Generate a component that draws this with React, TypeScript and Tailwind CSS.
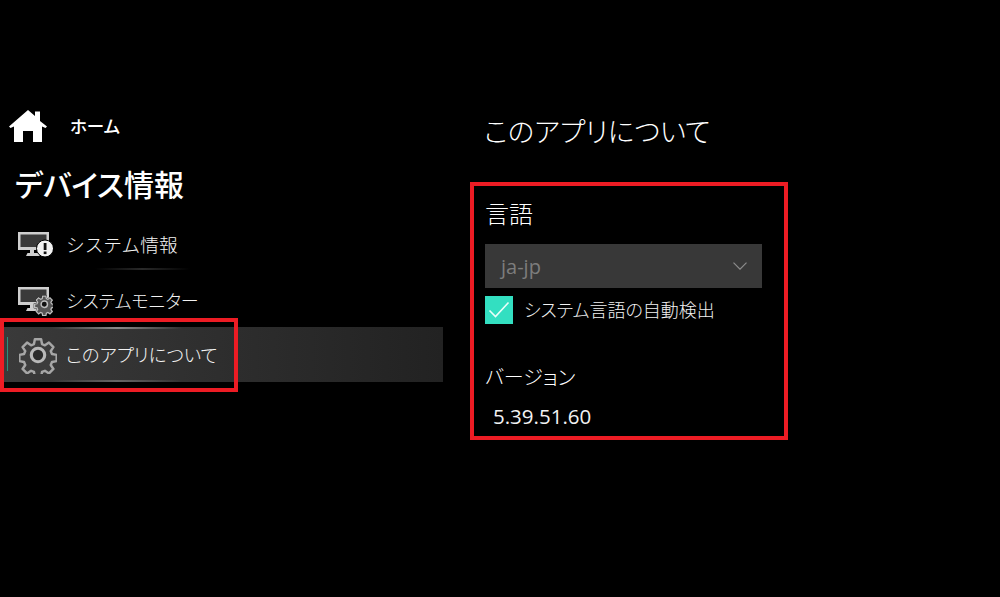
import React from 'react';

const jp = "font-['Noto_Sans_CJK_JP','Noto_Sans',sans-serif] [font-feature-settings:'palt']";

const gearPath =
  'M13.2 2h5.6l.8 4.2 2.6 1.1 3.6-2.4 4 4-2.4 3.6 1.1 2.6 4.2.8v5.6l-4.2.8-1.1 2.6 2.4 3.6-4 4-3.6-2.4-2.6 1.1-.8 4.2h-5.6l-.8-4.2-2.6-1.1-3.6 2.4-4-4 2.4-3.6-1.1-2.6-4.2-.8v-5.6l4.2-.8 1.1-2.6-2.4-3.6 4-4 3.6 2.4 2.6-1.1z';

function HomeIcon() {
  return (
    <svg width="40" height="34" viewBox="0 0 40 34" className="shrink-0">
      <path fill="#fff" d="M1 17.5 20 1l7 6V2.500h5v9.500l7 5.500-1.500 1.500-3.500-1.500V33h-9V22h-10v11H6V17.500L2.500 19z" />
    </svg>
  );
}

function MonitorIcon({ badge }: { badge: 'alert' | 'gear' }) {
  return (
    <svg width="36" height="32" viewBox="0 0 36 32" className="shrink-0">
      <path fill="#cfcfcf" d="M1 3h31v14h-6v4H1z" />
      <path fill="#3a3a3a" d="M3.500 5.500h26v9h-6v4h-20z" />
      <path fill="#cfcfcf" d="M2 18h22v3H2zM13 21h4v3h4.500l1.500 3H9l1.500-3H13z" />
      {badge === 'alert' ? (
        <>
          <circle cx="28" cy="19.500" r="8.500" fill="#f2f2f2" stroke="#000" strokeWidth="1" />
          <rect x="26.700" y="14" width="2.800" height="7" fill="#111" />
          <rect x="26.700" y="22.500" width="2.800" height="2.600" fill="#111" />
        </>
      ) : (
        <g transform="translate(18 11) scale(0.58)">
          <path d={gearPath} fill="#555" stroke="#000" strokeWidth="3" paintOrder="stroke" />
          <path d={gearPath} fill="none" stroke="#bdbdbd" strokeWidth="2.200" />
          <circle cx="16" cy="16" r="5.500" fill="#111" stroke="#bdbdbd" strokeWidth="2.500" />
        </g>
      )}
    </svg>
  );
}

function GearIcon() {
  return (
    <svg width="38" height="38" viewBox="-1 -1 34 34" className="shrink-0">
      <path d={gearPath} fill="#3c3c3c" stroke="#a6a6a6" strokeWidth="2.200" strokeLinejoin="round" />
      <circle cx="16" cy="16" r="6" fill="#2a2a2a" stroke="#b8b8b8" strokeWidth="2.800" />
    </svg>
  );
}

function NavRow({ badge, label, className = '', children }: { badge: 'alert' | 'gear'; label: string; className?: string; children?: React.ReactNode }) {
  return (
    <div className="relative flex h-[55px] items-center pl-[17px]">
      <MonitorIcon badge={badge} />
      <span className={`ml-[13px] leading-none font-light text-[#f2f2f2] ${className}`}>{label}</span>
      {children}
    </div>
  );
}

export default function App() {
  return (
    <div className={`relative flex h-[597px] w-[1000px] overflow-hidden bg-black text-white ${jp}`}>
      {/* left menu */}
      <aside className="flex w-[443px] shrink-0 flex-col pt-[106px]">
        <div className="flex h-[40px] items-center pl-[8px]">
          <HomeIcon />
          <span className="ml-[22px] text-[17.500px] leading-none font-medium">ホーム</span>
        </div>
        <h2 className="mt-[19px] h-[52px] pl-[15px] text-[30px] leading-[36px] font-medium">デバイス情報</h2>
        <NavRow badge="alert" label="システム情報" className="text-[18.700px] [font-feature-settings:normal]">
          <span className="absolute bottom-[2px] left-[95px] h-[2px] w-[95px] bg-gradient-to-r from-transparent via-[#2a2a2a] to-transparent" />
        </NavRow>
        <NavRow badge="gear" label="システムモニター" className="text-[18px]" />
        <div className="relative ml-[2px] flex h-[55px] items-center bg-gradient-to-r from-[#3a3a3a] to-[#222222] pl-[17px]">
          <span className="absolute top-[10px] left-[5px] h-[34px] w-[1px] bg-[#2b8f7c]" />
          <span className="absolute top-0 left-[50px] h-[2px] w-[130px] bg-gradient-to-r from-transparent via-[#8a8a8a] to-transparent" />
          <span className="absolute bottom-0 left-[50px] h-[2px] w-[130px] bg-gradient-to-r from-transparent via-[#666666] to-transparent" />
          <GearIcon />
          <span className="ml-[9px] text-[18.400px] leading-none font-light text-[#f2f2f2]">このアプリについて</span>
        </div>
      </aside>

      {/* right pane */}
      <main className="flex flex-col pt-[108px] pl-[41px]">
        <h1 className="text-[27.500px] leading-[44px] font-light">このアプリについて</h1>
        <h3 className="mt-[46px] ml-[1px] text-[24px] leading-[30px] font-light">言語</h3>
        <div className="mt-[16px] ml-[1px] flex h-[44px] w-[277px] items-center justify-between bg-[#383838] pr-[15px] pl-[16px]">
          <span className="relative top-[1px] font-['Open_Sans',sans-serif] text-[20px] text-[#7d7d7d]">ja-jp</span>
          <svg width="14" height="8" viewBox="0 0 14 8" fill="none" stroke="#8c8c8c" strokeWidth="1.200">
            <path d="M.5.7 7 7.200 13.500.7" />
          </svg>
        </div>
        <label className="mt-[8px] ml-[1px] flex items-center">
          <span className="flex size-[28px] items-center justify-center bg-[#33dfc1]">
            <svg width="22" height="18" viewBox="0 0 22 18" fill="none" stroke="#eafff9" strokeWidth="1.600">
              <path d="M1.500 9.500 7.500 15.500 20.500 1.500" />
            </svg>
          </span>
          <span className="relative -top-[1px] ml-[11px] text-[18px] leading-none font-light text-[#f2f2f2]">システム言語の自動検出</span>
        </label>
        <h3 className="mt-[38px] ml-[1px] text-[20px] leading-[30px] font-light">バージョン</h3>
        <p className="mt-[9px] ml-[1px] pl-[8px] font-['Open_Sans',sans-serif] text-[20.500px] leading-[30px] text-[#f2f2f2]">5.39.51.60</p>
      </main>

      {/* red annotation boxes */}
      <div className="absolute top-[318px] left-0 h-[74px] w-[238px] border-[4px] border-[#ed1c24]" />
      <div className="absolute top-[182px] left-[470px] h-[258px] w-[318px] border-[4px] border-[#ed1c24]" />
    </div>
  );
}
